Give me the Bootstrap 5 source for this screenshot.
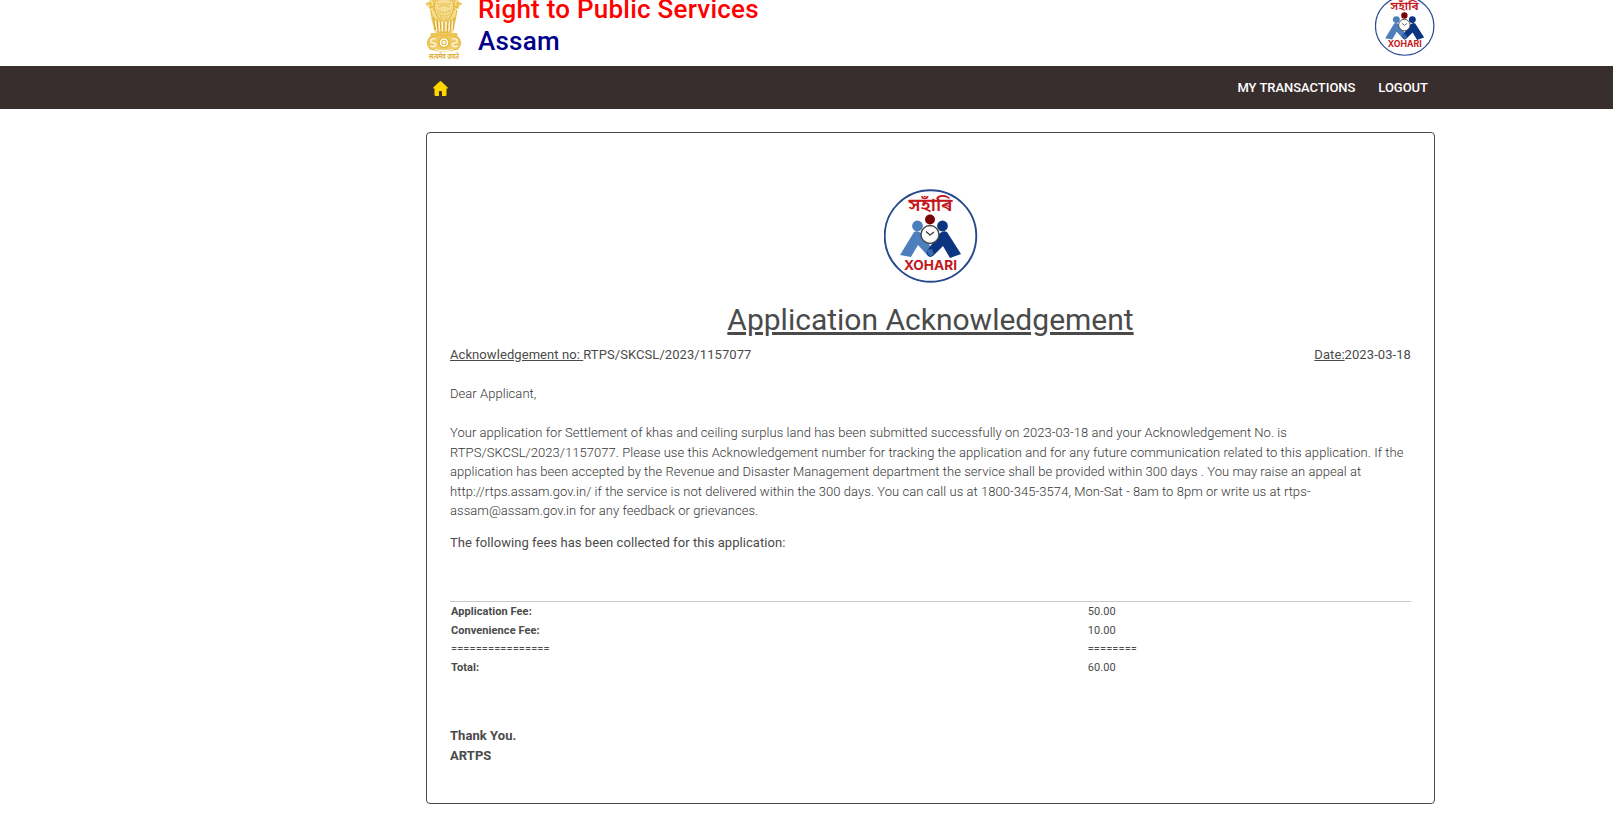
<!DOCTYPE html>
<html lang="en">
<head>
<meta charset="utf-8">
<meta name="viewport" content="width=device-width, initial-scale=1">
<title>Application Acknowledgement</title>
<link href="https://cdn.jsdelivr.net/npm/bootstrap@5.3.0/dist/css/bootstrap.min.css" rel="stylesheet">
<style>
body{font-family:Roboto,"Noto Sans",sans-serif;font-size:13px;line-height:19.5px;color:#4a4a4a;overflow:hidden}
.page-wrap{width:1009px;margin-left:426px}
.site-head{height:66px}
.site-name{font-size:26px;line-height:32px;font-weight:500;letter-spacing:.23px;margin:-7px 0 0 15px}
.name-red{color:#f00}.name-blue{color:#00008b}
.emblem{width:38px;height:74px;margin:-13px 0 0 -1px}
.head-logo{width:60px;height:60px;margin-top:-4px}
.site-nav{background:#382e2d;height:43px}
.site-nav a{color:#fff;font-weight:500;letter-spacing:-.03px;text-decoration:none}
.site-nav .home-link{margin:2px 0 0 7px}
.site-nav .logout{margin:0 7px 0 23px}
.ack-card{margin-top:23px;height:672px;border:1px solid #4a4a4a;border-radius:4px;padding:56px 23px 0}
.ack-logo{width:94px;height:94px}
.ack-title{font-size:30px;line-height:36px;font-weight:400;margin:19px 0 7px}
.ack-line{letter-spacing:.075px}
.letter-text{font-weight:300;color:#363636;letter-spacing:.047px}
.fees-intro{margin-top:12px;letter-spacing:.055px}
.fee-rule{border-top:1px solid #c8c8c8;margin-top:49px}
.fee-table{font-size:11px;line-height:16.5px;margin-top:1px;letter-spacing:.07px}
.fee-table td{padding:1px}
.fee-table b{font-weight:700}
.fee-sep{letter-spacing:.13px}
.closing{margin-top:49px;font-weight:700;letter-spacing:.06px}
</style>
</head>
<body class="bg-white">
<svg class="d-none" xmlns="http://www.w3.org/2000/svg">
  <symbol id="xohari" viewBox="0 0 94 94">
    <circle cx="46.500" cy="47" r="45.800" fill="#fff" stroke="#274a8c" stroke-width="1.900"/>
    <text x="46.500" y="22" text-anchor="middle" textLength="44" lengthAdjust="spacingAndGlyphs" font-family="Noto Sans Bengali,Noto Sans,sans-serif" font-weight="600" font-size="18" fill="#c4161c">সহাঁৰি</text>
    <path d="M25 11.500H67" stroke="#c4161c" stroke-width="1.500"/>
    <circle cx="33.500" cy="37" r="5.400" fill="#4c7fbc"/>
    <circle cx="58.500" cy="37" r="5.400" fill="#0b3580"/>
    <path d="M30 43Q34 41 38 45L49 61Q51 65 47 68L44 67L34 56L27 68L16 66Z" fill="#4c7fbc"/>
    <path d="M63 43Q59 41 55 45L43 62Q42 66 46 68L49 67L59 57L66 69L77 65Z" fill="#0b3580"/>
    <path d="M42 61L48 60L50 65L46 68Z" fill="#3868aa"/>
    <circle cx="46" cy="45.500" r="9" fill="#fff" stroke="#454545" stroke-width="1.400"/>
    <circle cx="46" cy="45.500" r="6.800" fill="none" stroke="#bbb" stroke-width=".5" stroke-dasharray="1 2.500"/>
    <path d="M42 42.500L46 46L50 43" fill="none" stroke="#333" stroke-width="1.100"/>
    <circle cx="46" cy="30.500" r="5" fill="#7a0508"/>
    <text x="46.500" y="80.500" text-anchor="middle" textLength="53" lengthAdjust="spacingAndGlyphs" font-family="Inter,Lato,sans-serif" font-weight="700" font-size="13.500" fill="#c4161c">XOHARI</text>
  </symbol>
</svg>
<header class="site-head">
  <div class="page-wrap d-flex align-items-start">
    <svg class="emblem flex-shrink-0" viewBox="0 -13 38 74" fill="none" stroke="#e6b93a" stroke-width="1.100">
      <path d="M9-5Q19-13 29-5L34 1L37 4L32 9L31 18L29 30Q28 34 19 34Q10 34 9 30L6 18L5 9L0 4L4 1Z" fill="#f5dd92" stroke="none"/>
      <path d="M11-2Q19-9 27-2Q30 7 27 14Q24 21 19 21Q14 21 11 14Q8 7 11-2ZM1 4L6 3L5 8L9 6M37 4L32 3L33 8L29 6M6 10Q8 22 11 30M32 10Q30 22 27 30"/>
      <path d="M12 1Q19-5 26 1M12 4H26M14 7Q19 4 24 7M12 10Q19 15 26 10M12 13Q19 19 26 13M15 17Q19 21 23 17M8 0L10 12M30 0L28 12M5 4L9 10M33 4L29 10" stroke-dasharray="2 .8"/>
      <path d="M12 19L13 32M15 21L16 33M22 33L23 21M25 32L26 19M19 22V33M9 17L10 30M29 17L28 30" stroke="#d8a321"/>
      <path d="M10 21L12 31M14 22L15 31M17.500 22V31M21 22V31M24.500 22L24 31M28 21L27 30" stroke="#fff" stroke-width=".9"/>
      <path d="M6 34Q19 31 32 34L31 37H7Z" fill="#edc95f"/>
      <path d="M5 37Q0 43 5 49Q19 53 33 49Q38 43 33 37Q19 34 5 37Z" fill="#f0cb66"/>
      <circle cx="19" cy="42.500" r="5" fill="#fff" stroke-width="1.500"/><circle cx="19" cy="42.500" r="2.200"/>
      <path d="M11 39Q5 38 6 42L11 44Q11 48 5 46M27 39Q33 38 32 42L27 44Q27 48 33 46M10 49.500Q19 51.500 28 49.500" stroke="#fff"/>
      <text x="19" y="58.500" text-anchor="middle" textLength="30" lengthAdjust="spacingAndGlyphs" font-family="Noto Sans Devanagari,Noto Sans,sans-serif" font-size="7.500" font-weight="600" fill="#dca91f" stroke="none">सत्यमेव जयते</text>
    </svg>
    <div class="site-name"><div class="name-red">Right to Public Services</div><div class="name-blue">Assam</div></div>
    <svg class="head-logo ms-auto"><use href="#xohari"/></svg>
  </div>
</header>
<nav class="site-nav">
  <div class="page-wrap h-100 d-flex align-items-center">
    <a href="#" class="home-link d-flex" aria-label="Home"><svg width="15" height="15" viewBox="0 0 15 15" fill="#ffd500"><path d="M7.500 0Q8 0 8.400.4L14.700 6.500Q15.200 7.500 14 7.600H13.500V14Q13.500 15 12.500 15H9V11Q9 10 8 10H7Q6 10 6 11V15H2.500Q1.500 15 1.500 14V7.600H1Q-.2 7.500.3 6.500L6.600.4Q7 0 7.500 0Z"/></svg></a>
    <a href="#" class="ms-auto">MY TRANSACTIONS</a>
    <a href="#" class="logout">LOGOUT</a>
  </div>
</nav>
<main class="page-wrap ack-card">
  <div class="text-center"><svg class="ack-logo d-block mx-auto"><use href="#xohari"/></svg>
    <h1 class="ack-title text-decoration-underline">Application Acknowledgement</h1></div>
  <div class="ack-line d-flex justify-content-between"><span><u>Acknowledgement no: </u>RTPS/SKCSL/2023/1157077</span><span><u>Date:</u>2023-03-18</span></div>
  <div class="letter-text"><br>Dear Applicant,<br><br>Your application for Settlement of khas and ceiling surplus land has been submitted successfully on 2023-03-18 and your Acknowledgement No. is<br>RTPS/SKCSL/2023/1157077. Please use this Acknowledgement number for tracking the application and for any future communication related to this application. If the<br>application has been accepted by the Revenue and Disaster Management department the service shall be provided within 300 days . You may raise an appeal at<br>http://rtps.assam.gov.in/ if the service is not delivered within the 300 days. You can call us at 1800-345-3574, Mon-Sat - 8am to 8pm or write us at rtps-<br>assam@assam.gov.in for any feedback or grievances.</div>
  <div class="fees-intro">The following fees has been collected for this application:</div>
  <div class="fee-rule"></div>
  <table class="fee-table w-100">
    <colgroup><col style="width:66.250%"><col></colgroup>
    <tr><td><b>Application Fee:</b></td><td>50.00</td></tr>
    <tr><td><b>Convenience Fee:</b></td><td>10.00</td></tr>
    <tr class="fee-sep"><td>================</td><td>========</td></tr>
    <tr><td><b>Total:</b></td><td>60.00</td></tr>
  </table>
  <div class="closing">Thank You.<br>ARTPS</div>
</main>
<script src="https://cdn.jsdelivr.net/npm/bootstrap@5.3.0/dist/js/bootstrap.bundle.min.js"></script>
</body>
</html>
